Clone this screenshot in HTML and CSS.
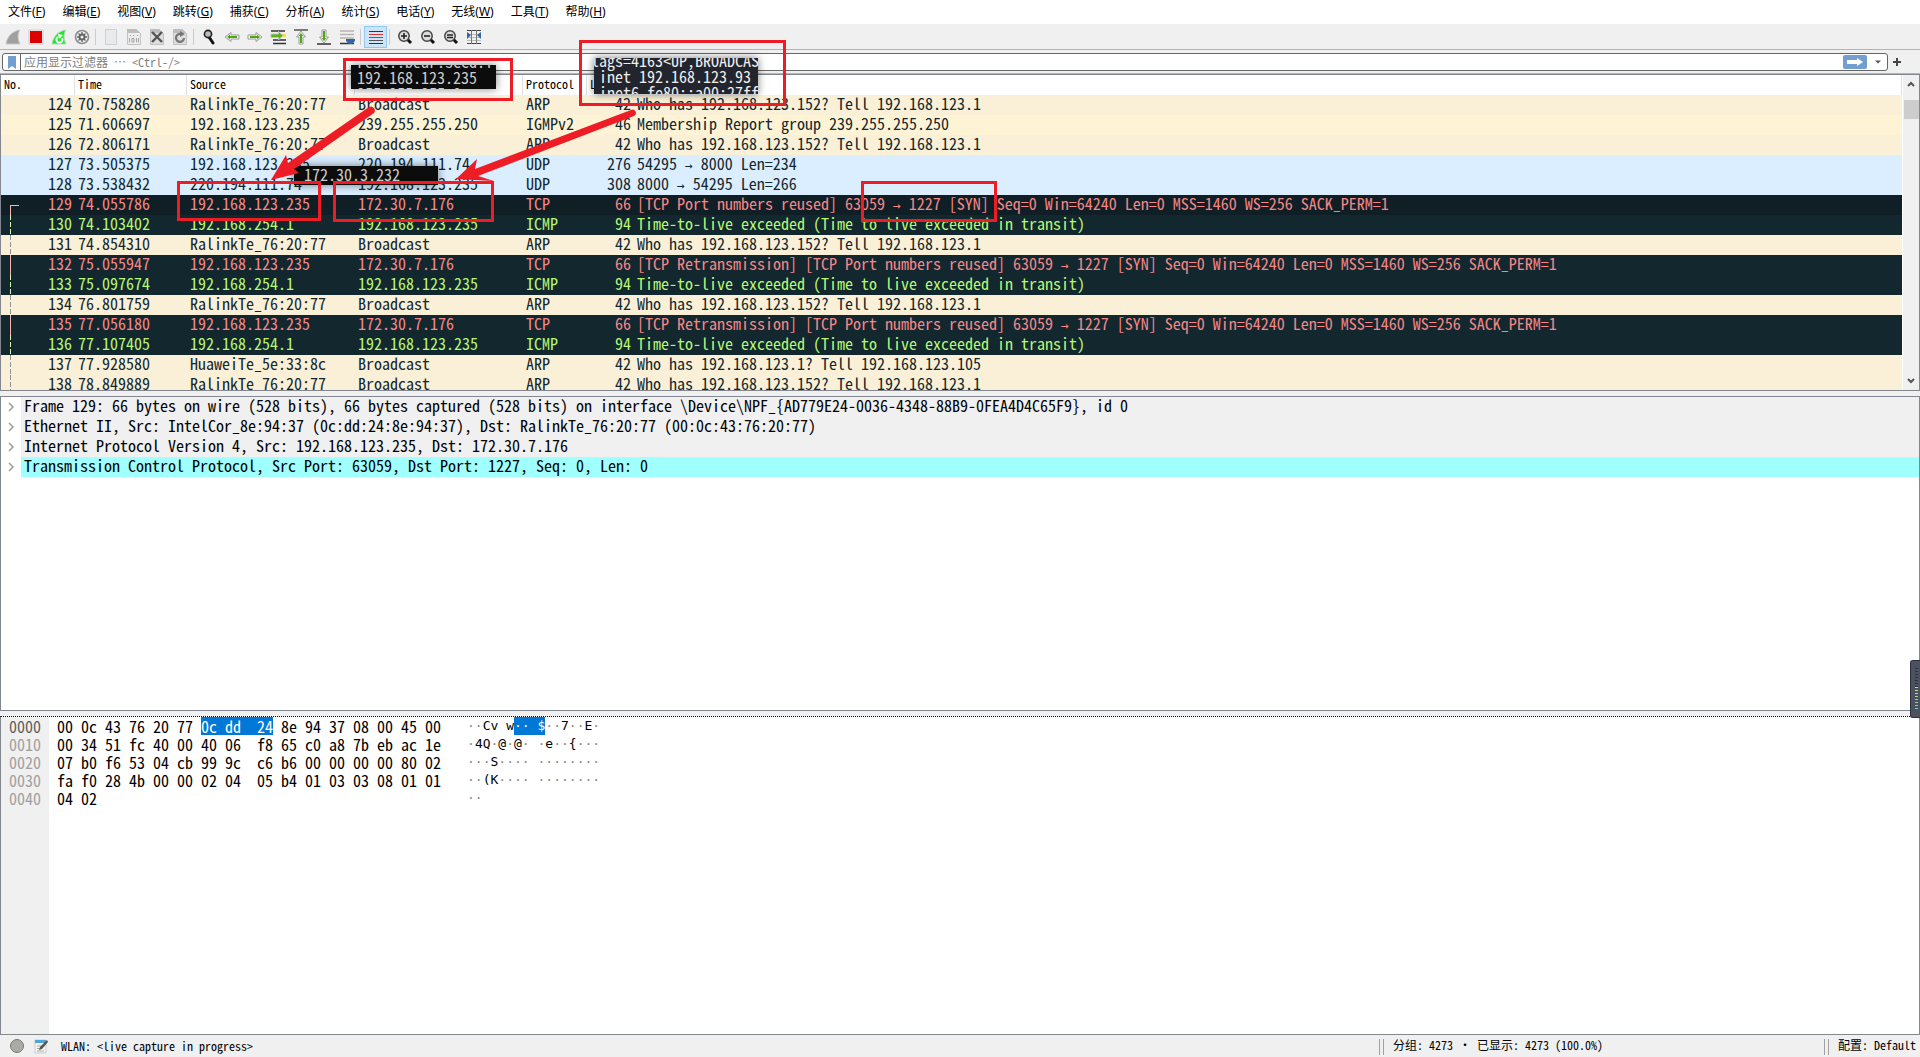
FILE: index.html
```html
<!DOCTYPE html>
<html lang="zh-CN">
<head>
<meta charset="utf-8">
<title>WLAN</title>
<link rel="stylesheet" href="styles.css">
</head>
<body>
<nav class="menubar">
  <button>文件(<u>F</u>)</button>
  <button>编辑(<u>E</u>)</button>
  <button>视图(<u>V</u>)</button>
  <button>跳转(<u>G</u>)</button>
  <button>捕获(<u>C</u>)</button>
  <button>分析(<u>A</u>)</button>
  <button>统计(<u>S</u>)</button>
  <button>电话(<u>Y</u>)</button>
  <button>无线(<u>W</u>)</button>
  <button>工具(<u>T</u>)</button>
  <button>帮助(<u>H</u>)</button>
</nav>

<div class="toolbar" role="toolbar">
  <button aria-label="Start"><svg viewBox="0 0 16 16"><path d="M1 15C2 8 7 2 15 1C12 5 13 11 15 15Z" fill="#a0a0a0" stroke="#c8c8c8"/></svg></button>
  <button aria-label="Stop"><svg viewBox="0 0 16 16"><rect x="1" y="1" width="14" height="14" fill="#eee" stroke="#d0d0d0"/><rect x="2" y="2" width="12" height="12" fill="#d00"/></svg></button>
  <button aria-label="Restart"><svg viewBox="0 0 16 16"><path d="M1 15C2 8 7 2 15 1C12 5 13 11 15 15Z" fill="#1fe52c" stroke="#b5d8b5"/><path d="M7 8a3 3 0 1 0 4 1" fill="none" stroke="#fff" stroke-width="2"/><path d="M7 5l5 1-4 4z" fill="#fff"/></svg></button>
  <button aria-label="Options"><svg viewBox="0 0 16 16"><circle cx="8" cy="8" r="6.500" fill="#f4f4f4" stroke="#8c8c8c" stroke-width="1.600"/><circle cx="8" cy="8" r="3.500" fill="#666"/><path d="M8 3v10M3 8h10M4.500 4.500l7 7M11.500 4.500l-7 7" stroke="#666" stroke-width="1.400"/><circle cx="8" cy="8" r="1.500" fill="#eee"/></svg></button>
  <i class="sep"></i>
  <button aria-label="Open"><svg viewBox="0 0 16 16"><path d="M2.500 .500h11v15h-11z" fill="#e9eaeb" stroke="#cfd0d1"/></svg></button>
  <button aria-label="Save"><svg viewBox="0 0 16 16"><path d="M1.500 .500h9l4 4v11h-13z" fill="#ececec" stroke="#c2c2c2"/><path d="M1 0h9l4 4H1z" fill="#bdbdbd"/><path d="M3.500 9v4.500M6 9.500h2v3.500H6zM10.500 9v4.500M12.500 9v4.500M4 6.500h1M7 6.500h1M11 6.500h1" fill="none" stroke="#a5a5a5"/></svg></button>
  <button aria-label="Close"><svg viewBox="0 0 16 16"><path d="M1.500 .500h9l4 4v11h-13z" fill="#dedede" stroke="#c2c2c2"/><path d="M1 0h9l4 4H1z" fill="#bdbdbd"/><path d="M3 3l10 10M13 3L3 13" stroke="#555" stroke-width="2.400"/></svg></button>
  <button aria-label="Reload"><svg viewBox="0 0 16 16"><path d="M1.500 .500h9l4 4v11h-13z" fill="#dedede" stroke="#c2c2c2"/><path d="M1 0h9l4 4H1z" fill="#bdbdbd"/><path d="M9 5A4 4 0 1 0 12 9" fill="none" stroke="#777" stroke-width="2.200"/><path d="M8 2v6l5-3z" fill="#777"/></svg></button>
  <i class="sep"></i>
  <button aria-label="Find"><svg viewBox="0 0 16 16"><path d="M8 8l4 6" stroke="#111" stroke-width="3" stroke-linecap="round"/><circle cx="7" cy="5" r="3.600" fill="#bbb" stroke="#222" stroke-width="1.600"/></svg></button>
  <button aria-label="Back"><svg viewBox="0 0 16 16"><path d="M1 8l6-4.500V6h8v4H7v2.500z" fill="#fff" stroke="#999"/><path d="M3 8l3-2.500V7h7v2H6v1.500z" fill="#4ea80c"/></svg></button>
  <button aria-label="Forward"><svg viewBox="0 0 16 16"><path d="M15 8L9 3.500V6H1v4h8v2.500z" fill="#fff" stroke="#999"/><path d="M13 8l-3-2.500V7H3v2h7v1.500z" fill="#4ea80c"/></svg></button>
  <button aria-label="Go to packet"><svg viewBox="0 0 16 16"><path d="M1 2h14M3 11h13M3 14.500h13" stroke="#333" stroke-width="1.500"/><path d="M10 5h6v3h-6z" fill="#fbd94c"/><path d="M13 6.500L8.500 2.500V5H1v3.500h7.500V11z" fill="#5bb318" stroke="#c4c4c4"/></svg></button>
  <button aria-label="First packet"><svg viewBox="0 0 16 16"><path d="M1 1h14" stroke="#555" stroke-width="1.500"/><path d="M8 2l4.500 6H10v7H6V8H3.500z" fill="#fff" stroke="#999"/><path d="M8 4l2.500 3H9v7H7V7H5.500z" fill="#4ea80c"/></svg></button>
  <button aria-label="Last packet"><svg viewBox="0 0 16 16"><path d="M1 15h14" stroke="#333" stroke-width="1.500"/><path d="M8 14l4.500-6H10V1H6v7H3.500z" fill="#fff" stroke="#999"/><path d="M8 12l2.500-3H9V2H7v7H5.500z" fill="#4ea80c"/></svg></button>
  <button aria-label="Auto scroll"><svg viewBox="0 0 16 16"><path d="M1 2h14M1 5.500h14M1 9h14" stroke="#b5b5aa" stroke-width="1.500"/><path d="M1 14.500h14" stroke="#333" stroke-width="1.500"/><path d="M7 10h9v2l-3 3H10l-3-3z" fill="#3465a4"/></svg></button>
  <i class="sep"></i>
  <button class="checked" aria-label="Colorize"><svg viewBox="0 0 16 16"><path d="M1 2.500h14M1 14.500h14" stroke="#333"/><path d="M1 5.500h14" stroke="#e03030"/><path d="M1 8.500h14" stroke="#3465a4"/><path d="M1 11.500h14" stroke="#555"/></svg></button>
  <i class="sep"></i>
  <button aria-label="Zoom in"><svg viewBox="0 0 16 16"><path d="M10 10l4 4" stroke="#111" stroke-width="3"/><circle cx="7" cy="7" r="5.200" fill="#ddd" stroke="#444" stroke-width="1.500"/><path d="M4 7h6M7 4v6" stroke="#222" stroke-width="1.600"/></svg></button>
  <button aria-label="Zoom out"><svg viewBox="0 0 16 16"><path d="M10 10l4 4" stroke="#111" stroke-width="3"/><circle cx="7" cy="7" r="5.200" fill="#ddd" stroke="#444" stroke-width="1.500"/><path d="M4 7h6" stroke="#222" stroke-width="1.600"/></svg></button>
  <button aria-label="Normal size"><svg viewBox="0 0 16 16"><path d="M10 10l4 4" stroke="#111" stroke-width="3"/><circle cx="7" cy="7" r="5.200" fill="#ddd" stroke="#444" stroke-width="1.500"/><path d="M4 6h6M4 8.500h6" stroke="#222" stroke-width="1.400"/></svg></button>
  <button aria-label="Resize columns"><svg viewBox="0 0 16 16"><path d="M1 1.500h14M1 14.500h14" stroke="#444"/><path d="M1 5.500h14M1 8.500h14M1 11.500h14" stroke="#bbb"/><path d="M5.500 1v14M10.500 1v14" stroke="#777"/><path d="M1 3l4 3-4 4zM15 3l-4 3 4 4z" fill="#3465a4"/></svg></button>
</div>

<div class="filterbar">
  <div class="filter">
    <button class="bookmark" aria-label="Bookmarks"><svg viewBox="0 0 8 13"><path d="M0 0h8v13L4 10 0 13z" fill="#729fcf"/></svg></button>
    <input type="text" aria-label="应用显示过滤器" placeholder="应用显示过滤器 ⋯ &lt;Ctrl-/&gt;">
    <button class="apply" aria-label="Apply"><svg viewBox="0 0 24 14"><path d="M4 5h10V3l6 4-6 4V9H4z" fill="#fff"/></svg></button>
    <button class="drop" aria-label="History"><svg viewBox="0 0 8 4"><path d="M0 0h8L4 4z" fill="#555"/></svg></button>
  </div>
  <button class="add" aria-label="Add"><svg viewBox="0 0 8 8"><path d="M4 0v8M0 4h8" stroke="#444" stroke-width="2"/></svg></button>
</div>

<main class="panes">
  <section class="pane packets">
    <div class="list">
      <table>
        <colgroup><col class="c-no"><col class="c-time"><col class="c-addr"><col class="c-addr"><col class="c-proto"><col class="c-len"><col></colgroup>
        <thead><tr><th>No.</th><th>Time</th><th>Source</th><th>Destination</th><th>Protocol</th><th>Length</th><th>Info</th></tr></thead>
        <tbody>
        <tr class="arp"><td>124</td><td>70.758286</td><td>RalinkTe_76:20:77</td><td>Broadcast</td><td>ARP</td><td>42</td><td>Who has 192.168.123.152? Tell 192.168.123.1</td></tr>
        <tr class="igmp"><td>125</td><td>71.606697</td><td>192.168.123.235</td><td>239.255.255.250</td><td>IGMPv2</td><td>46</td><td>Membership Report group 239.255.255.250</td></tr>
        <tr class="arp"><td>126</td><td>72.806171</td><td>RalinkTe_76:20:77</td><td>Broadcast</td><td>ARP</td><td>42</td><td>Who has 192.168.123.152? Tell 192.168.123.1</td></tr>
        <tr class="udp"><td>127</td><td>73.505375</td><td>192.168.123.235</td><td>220.194.111.74</td><td>UDP</td><td>276</td><td>54295 <i>→</i> 8000 Len=234</td></tr>
        <tr class="udp"><td>128</td><td>73.538432</td><td>220.194.111.74</td><td>192.168.123.235</td><td>UDP</td><td>308</td><td>8000 <i>→</i> 54295 Len=266</td></tr>
        <tr class="tcp first"><td>129</td><td>74.055786</td><td>192.168.123.235</td><td>172.30.7.176</td><td>TCP</td><td>66</td><td>[TCP Port numbers reused] 63059 <i>→</i> 1227 [SYN] Seq=0 Win=64240 Len=0 MSS=1460 WS=256 SACK_PERM=1</td></tr>
        <tr class="icmp rel"><td>130</td><td>74.103402</td><td>192.168.254.1</td><td>192.168.123.235</td><td>ICMP</td><td>94</td><td>Time-to-live exceeded (Time to live exceeded in transit)</td></tr>
        <tr class="arp rel"><td>131</td><td>74.854310</td><td>RalinkTe_76:20:77</td><td>Broadcast</td><td>ARP</td><td>42</td><td>Who has 192.168.123.152? Tell 192.168.123.1</td></tr>
        <tr class="tcp"><td>132</td><td>75.055947</td><td>192.168.123.235</td><td>172.30.7.176</td><td>TCP</td><td>66</td><td>[TCP Retransmission] [TCP Port numbers reused] 63059 <i>→</i> 1227 [SYN] Seq=0 Win=64240 Len=0 MSS=1460 WS=256 SACK_PERM=1</td></tr>
        <tr class="icmp rel"><td>133</td><td>75.097674</td><td>192.168.254.1</td><td>192.168.123.235</td><td>ICMP</td><td>94</td><td>Time-to-live exceeded (Time to live exceeded in transit)</td></tr>
        <tr class="arp rel"><td>134</td><td>76.801759</td><td>RalinkTe_76:20:77</td><td>Broadcast</td><td>ARP</td><td>42</td><td>Who has 192.168.123.152? Tell 192.168.123.1</td></tr>
        <tr class="tcp"><td>135</td><td>77.056180</td><td>192.168.123.235</td><td>172.30.7.176</td><td>TCP</td><td>66</td><td>[TCP Retransmission] [TCP Port numbers reused] 63059 <i>→</i> 1227 [SYN] Seq=0 Win=64240 Len=0 MSS=1460 WS=256 SACK_PERM=1</td></tr>
        <tr class="icmp rel"><td>136</td><td>77.107405</td><td>192.168.254.1</td><td>192.168.123.235</td><td>ICMP</td><td>94</td><td>Time-to-live exceeded (Time to live exceeded in transit)</td></tr>
        <tr class="arp rel"><td>137</td><td>77.928580</td><td>HuaweiTe_5e:33:8c</td><td>Broadcast</td><td>ARP</td><td>42</td><td>Who has 192.168.123.1? Tell 192.168.123.105</td></tr>
        <tr class="arp rel"><td>138</td><td>78.849889</td><td>RalinkTe_76:20:77</td><td>Broadcast</td><td>ARP</td><td>42</td><td>Who has 192.168.123.152? Tell 192.168.123.1</td></tr>
        </tbody>
      </table>
    </div>
    <div class="scrollbar">
      <svg viewBox="0 0 8 6"><path d="M1 5l3-3 3 3" fill="none" stroke="#555" stroke-width="2"/></svg>
      <span class="thumb"></span>
      <svg viewBox="0 0 8 6"><path d="M1 1l3 3 3-3" fill="none" stroke="#555" stroke-width="2"/></svg>
    </div>
  </section>

  <section class="pane details">
    <div class="node"><button aria-label="Expand"><svg viewBox="0 0 6 10"><path d="M1 1l4 4-4 4" fill="none" stroke="#999" stroke-width="1.500"/></svg></button><span>Frame 129: 66 bytes on wire (528 bits), 66 bytes captured (528 bits) on interface \Device\NPF_{AD779E24-0036-4348-88B9-0FEA4D4C65F9}, id 0</span></div>
    <div class="node"><button aria-label="Expand"><svg viewBox="0 0 6 10"><path d="M1 1l4 4-4 4" fill="none" stroke="#999" stroke-width="1.500"/></svg></button><span>Ethernet II, Src: IntelCor_8e:94:37 (0c:dd:24:8e:94:37), Dst: RalinkTe_76:20:77 (00:0c:43:76:20:77)</span></div>
    <div class="node"><button aria-label="Expand"><svg viewBox="0 0 6 10"><path d="M1 1l4 4-4 4" fill="none" stroke="#999" stroke-width="1.500"/></svg></button><span>Internet Protocol Version 4, Src: 192.168.123.235, Dst: 172.30.7.176</span></div>
    <div class="node selected"><button aria-label="Expand"><svg viewBox="0 0 6 10"><path d="M1 1l4 4-4 4" fill="none" stroke="#999" stroke-width="1.500"/></svg></button><span>Transmission Control Protocol, Src Port: 63059, Dst Port: 1227, Seq: 0, Len: 0</span></div>
  </section>

  <section class="pane bytes">
    <div class="offsets"><b>0000</b><span>0010</span><span>0020</span><span>0030</span><span>0040</span></div>
    <pre class="hex">00 0c 43 76 20 77 <mark>0c dd  24</mark> 8e 94 37 08 00 45 00
00 34 51 fc 40 00 40 06  f8 65 c0 a8 7b eb ac 1e
07 b0 f6 53 04 cb 99 9c  c6 b6 00 00 00 00 80 02
fa f0 28 4b 00 00 02 04  05 b4 01 03 03 08 01 01
04 02</pre>
    <pre class="ascii">··<b>Cv w</b><mark>·· $</mark>··<b>7</b>··<b>E</b>·
·<b>4Q</b>·<b>@</b>·<b>@</b>· ·<b>e</b>··<b>{</b>···
···<b>S</b>···· ········
··<b>(K</b>···· ········
··</pre>
  </section>
</main>

<footer class="statusbar">
  <div class="state">
    <svg viewBox="0 0 16 16"><circle cx="8" cy="8" r="6.500" fill="#a9aca6" stroke="#777"/></svg>
    <svg viewBox="0 0 16 16"><path d="M2 2h11v13H2z" fill="#f3f3f0" stroke="#ccc"/><path d="M2 2h11v3H2z" fill="#4ba6dd"/><path d="M4 8h5M4 10.500h4M4 13h7" stroke="#aaa"/><path d="M14 2L7 9l-1 3 3-1 6-7z" fill="#555"/></svg>
    <span>WLAN: &lt;live capture in progress&gt;</span>
  </div>
  <div class="counts">分组: 4273 · 已显示: 4273 (100.0%)</div>
  <div class="profile">配置: Default</div>
</footer>

<div class="clip clip-host"><span>rese..bear.sccd.ii</span><span>192.168.123.235</span><span>255.255.255.0</span></div>
<div class="clip clip-linux"><span>lags=4163&lt;UP,BROADCAS</span><span> inet 192.168.123.93</span><span> inet6 fe80::a00:27ff</span></div>
<div class="clip clip-route"><span>172.30.3.232</span></div>
<svg class="marks" width="1000" height="230" viewBox="0 0 1000 230">
  <g fill="none" stroke="#ee1c25" stroke-width="3">
    <rect x="344.500" y="59.500" width="167" height="40"/>
    <rect x="580.500" y="41.500" width="204" height="63"/>
    <rect x="178.500" y="182.500" width="141" height="37"/>
    <rect x="334.500" y="182.500" width="158" height="38"/>
    <rect x="862.500" y="182.500" width="133" height="38"/>
  </g>
  <g fill="#ee1c25">
    <path d="M271 180l15-25 2 8 81-56a4 4 0 0 1 5 6l-80 56 5 4z"/>
    <path d="M456 179l21-20-2 10 156-59a3 3 0 0 1 3 6l-156 60 16 5z"/>
  </g>
</svg>
<div class="meter"><span class="idle"></span><span class="level"></span></div>
</body>
</html>
```
FILE: styles.css
```css
* { box-sizing: border-box; }

body {
  margin: 0;
  height: 100vh;
  display: flex;
  flex-direction: column;
  overflow: hidden;
  position: relative;
  background: #f0f0f0;
  color: #000;
  font: 12px/20px "Noto Sans Mono CJK SC", "Liberation Mono", "Noto Sans CJK SC", monospace;
}

button {
  border: 0;
  padding: 0;
  background: none;
  color: inherit;
  font: inherit;
  display: flex;
  align-items: center;
  justify-content: center;
}

.menubar {
  flex: 0 0 23px;
  display: flex;
  gap: 17px;
  padding: 0 8px;
  background: #fff;
  font: 12px/24px "Noto Sans", "Noto Sans CJK SC", sans-serif;
}
.menubar button { display: block; white-space: nowrap; }

.toolbar {
  flex: 0 0 26px;
  display: flex;
  align-items: center;
  padding: 0 1px;
  border-bottom: 1px solid #b4b4b4;
}
.toolbar button { width: 23px; height: 22px; }
.toolbar svg { width: 16px; height: 16px; }
.toolbar .checked { background: #cce4f7; border: 1px solid #90c8f6; }
.sep { width: 6px; height: 16px; background: linear-gradient(#ccc, #ccc) 2px 0 / 1px 100% no-repeat; }

.filterbar {
  flex: 0 0 24px;
  display: flex;
  align-items: center;
  padding: 3px 14px 2px 2px;
  border-bottom: 1px solid #b4b4b4;
}
.filter {
  flex: 1;
  display: flex;
  align-items: center;
  height: 18px;
  background: #fff;
  border: 1px solid #666;
  border-radius: 3px;
}
.bookmark { width: 18px; height: 16px; border-right: 1px solid #666; }
.bookmark svg { width: 8px; height: 13px; }
.filter input {
  flex: 1;
  height: 16px;
  border: 0;
  padding: 0 3px 2px;
  background: none;
  font: inherit;
  line-height: 14px;
}
.filter input::placeholder { color: #808080; opacity: 1; }
.apply { width: 24px; height: 14px; background: #729fcf; border-radius: 2px; }
.apply svg { width: 24px; height: 14px; }
.drop { width: 18px; margin-left: 2px; }
.drop svg { width: 6px; height: 4px; }
.add { width: 18px; }
.add svg { width: 8px; height: 8px; }

.panes { flex: 1; min-height: 0; display: flex; flex-direction: column; gap: 5px; }
.pane {
  flex: 317 1 0;
  min-height: 0;
  display: flex;
  overflow: hidden;
  background: #fff;
  border: 1px solid #828790;
  font: 16px/16px "Noto Sans Mono CJK SC", "DejaVu Sans Mono", monospace;
}

.list { flex: 1; min-width: 0; overflow: hidden; }
table { width: 100%; table-layout: fixed; border-collapse: separate; border-spacing: 0; }
.c-no { width: 74px; }
.c-time { width: 112px; }
.c-addr { width: 168px; }
.c-proto { width: 64px; }
.c-len { width: 47px; }
th, td { height: 20px; padding: 0 3px; text-align: left; vertical-align: top; white-space: pre; }
th {
  font: 12px/18px "Noto Sans Mono CJK SC", "Liberation Mono", monospace;
  border-right: 1px solid #e0e0e0;
}
td i { font: 13px/1px "DejaVu Sans Mono", monospace; }
td:nth-child(1), td:nth-child(6) { text-align: right; }
.arp { background: #faf0d7; color: #12272e; }
.igmp { background: #fff3d6; color: #12272e; }
.udp { background: #daeeff; color: #12272e; }
.tcp { background: #12272e; color: #f78787; }
.icmp { background: #12272e; color: #b7f774; }
.first { background: #0f1f25; }

/* conversation line in the first column */
.tcp td:first-child { background: linear-gradient(#f7b5b5, #f7b5b5) 9px 0 / 1px 100% no-repeat; }
.first td:first-child {
  background:
    linear-gradient(#f7b5b5, #f7b5b5) 9px 10px / 1px 10px no-repeat,
    linear-gradient(#f7b5b5, #f7b5b5) 9px 10px / 9px 1px no-repeat;
}
.rel { --line: #8c9298; }
.icmp.rel { --line: #d3f7b0; }
.rel td:first-child {
  background: repeating-linear-gradient(var(--line) 0 5px, transparent 5px 7px) 9px 0 / 1px 100% no-repeat;
}

.scrollbar {
  flex: 0 0 17px;
  display: flex;
  flex-direction: column;
  align-items: center;
  padding: 6px 0;
  background: #f0f0f0;
  border-left: 1px solid #fff;
}
.scrollbar svg { width: 8px; height: 6px; }
.thumb { width: 15px; height: 19px; margin: 13px 0 auto; background: #cdcdcd; }

.details { flex-grow: 316; flex-direction: column; }
.node { display: flex; height: 20px; }
.node button { width: 20px; padding-right: 1px; }
.node svg { width: 6px; height: 10px; }
.node span { flex: 1; padding-left: 3px; background: #f0f0f0; white-space: pre; }
.node.selected span { background: #a0ffff; }

.bytes { flex-grow: 319; border-top: 1px dotted #000; line-height: 18px; }
.bytes pre { margin: 0; font: inherit; }
.bytes b { font-weight: 400; }
.offsets {
  width: 48px;
  padding-left: 8px;
  display: flex;
  flex-direction: column;
  background: #f0f0f0;
  color: #a0a0a0;
}
.offsets b { color: #606060; }
.hex { padding-left: 8px; }
.bytes .ascii {
  padding-left: 26px;
  color: #888;
  font: 13px/18px "DejaVu Sans Mono", monospace;
}
.ascii b { color: #000; }
mark { background: #0078d7; color: #fff; display: inline-block; height: 18px; vertical-align: top; }

.statusbar { flex: 0 0 22px; display: flex; }
.state { flex: 1; display: flex; align-items: center; padding-left: 9px; gap: 8px; }
.state svg { width: 16px; height: 16px; }
.state span { padding-left: 4px; }
.counts, .profile {
  padding-left: 14px;
  background: linear-gradient(90deg, #a0a0a0 1px, transparent 1px 4px, #a0a0a0 4px 5px, transparent 5px) 0 4px / 100% 16px no-repeat;
  white-space: nowrap;
}
.counts { flex: 0 0 445px; }
.profile { flex: 0 0 96px; }

/* snippets pinned over the capture */
.clip {
  position: absolute;
  display: flex;
  flex-direction: column;
  justify-content: center;
  overflow: hidden;
  background: #0c0c0c;
  color: #ccc;
  box-shadow: 0 0 8px rgba(0, 0, 0, .5);
  white-space: pre;
  font: 16px/16px "Noto Sans Mono CJK SC", "Liberation Mono", monospace;
}
.clip-host { left: 351px; top: 65px; width: 145px; height: 24px; padding-left: 6px; }
.clip-linux {
  left: 594px; top: 58px; width: 164px; height: 36px;
  background: #23252e; color: #eee;
  text-indent: -3px;
}
.clip-route { left: 294px; top: 166px; width: 144px; height: 19px; padding: 0 0 3px 10px; }
.marks { position: absolute; left: 0; top: 0; pointer-events: none; }

.meter {
  position: absolute;
  right: 0;
  top: 660px;
  width: 10px;
  height: 58px;
  padding: 7px 2px 6px 4px;
  display: flex;
  flex-direction: column;
  background: #4c5160;
  border: 1px solid #2c303c;
  border-right: 0;
  border-radius: 3px 0 0 3px;
}
.idle { flex: 0 0 19px; background: repeating-linear-gradient(#2c303c 0 1px, transparent 1px 3px); }
.level {
  flex: 1;
  background:
    repeating-linear-gradient(transparent 0 1px, #4c5160 1px 3px),
    linear-gradient(#e0dc60, #8fd890, #50d8d8);
}
```
